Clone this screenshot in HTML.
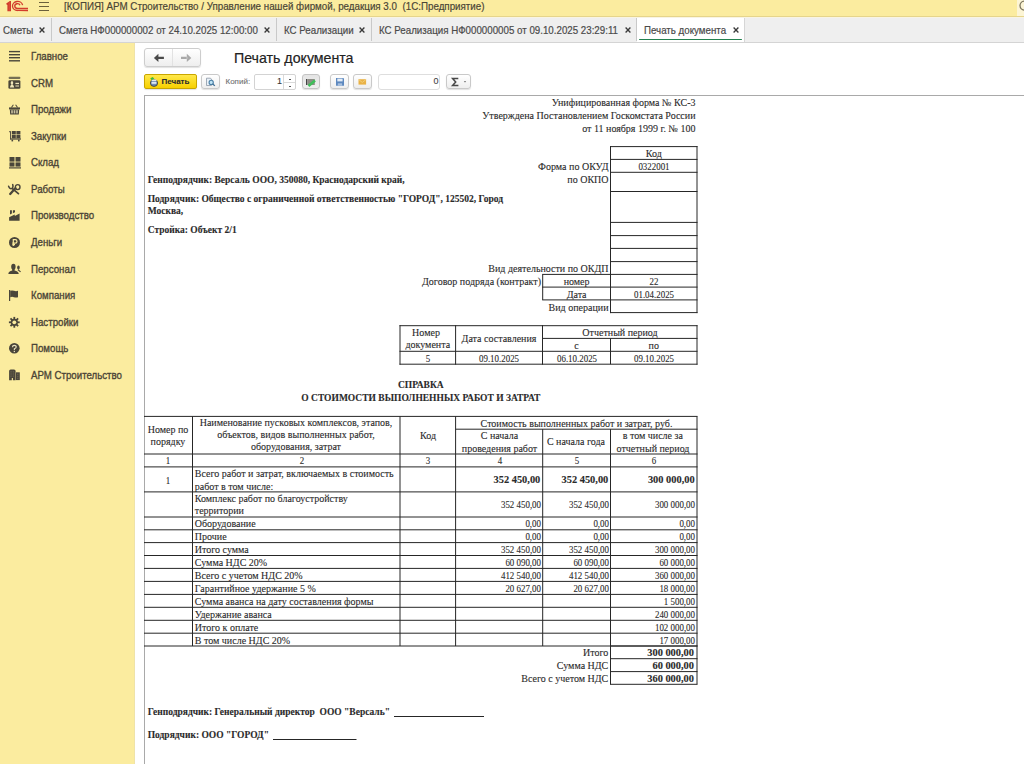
<!DOCTYPE html>
<html><head><meta charset="utf-8">
<style>
*{box-sizing:border-box;margin:0;padding:0}
html,body{width:1024px;height:764px;overflow:hidden;background:#fff;font-family:"Liberation Sans",sans-serif;color:#4a4a4a}
.a{position:absolute}
.tx{white-space:nowrap;color:#2a2a2a;-webkit-text-stroke:0.1px currentColor}
.n{letter-spacing:-0.45px}
.ui{-webkit-text-stroke:0.35px currentColor}
.ui2{-webkit-text-stroke:0.2px currentColor}
.btn{position:absolute;border:1px solid #c9c9c9;border-radius:3px;background:linear-gradient(#ffffff,#eeeeee);box-shadow:0 1px 1px rgba(0,0,0,0.12)}
</style></head><body>

<div class="a" style="left:0;top:0;width:1024px;height:17px;background:#fbec9f;border-bottom:1px solid #e6d58c"></div>
<svg class="a" style="left:0;top:0" width="32" height="14" viewBox="0 0 32 14">
<path d="M6.2 3.4 L9.9 1.0 H11.0 V11.3 H7.4 V4.7 L6.9 5.0Z" fill="#cf3a2a"/>
<path d="M9.2 2.2 V10.6" stroke="#ea5a48" stroke-width="0.7"/>
<g fill="none" stroke="#d23c2c" stroke-width="1.35">
<path d="M22.6 5.1 A5.1 4.5 0 1 0 17.6 10.45 H28"/>
<path d="M20.0 5.2 A2.7 2.4 0 1 0 17.6 8.45 H28"/>
</g></svg>
<div class="a" style="left:1017px;top:0;width:7px;height:16px;background:#fcf5d6"></div>
<svg class="a" style="left:1010px;top:0" width="14" height="14" viewBox="1010 0 14 14"><circle cx="1024.6" cy="5.6" r="4.6" fill="none" stroke="#7a735c" stroke-width="1.3"/></svg>
<div class="a" style="left:39px;top:2px;width:10px;height:1.4px;background:#6a5f3c"></div>
<div class="a" style="left:39px;top:6px;width:10px;height:1.4px;background:#6a5f3c"></div>
<div class="a" style="left:39px;top:10px;width:10px;height:1.4px;background:#6a5f3c"></div>
<div class="a tx ui2" style="top:0px;font-size:11px;line-height:13.2px;font-family:'Liberation Sans';color:#4a4536;left:64.3px;transform:scaleX(0.89);transform-origin:0 0;">[КОПИЯ] АРМ Строительство / Управление нашей фирмой, редакция 3.0&nbsp; (1С:Предприятие)</div>
<div class="a" style="left:0;top:17px;width:1024px;height:26px;background:#efefef;border-top:1px solid #f8f4e4;border-bottom:1px solid #d4d4d4"></div>
<div class="a" style="left:51px;top:18px;width:1px;height:23px;background:#c9c9c9"></div>
<div class="a tx ui2" style="top:24px;font-size:11px;line-height:13.2px;font-family:'Liberation Sans';color:#4a4a4a;left:3.4px;transform:scaleX(0.885);transform-origin:0 0;">Сметы</div>
<svg class="a" style="left:39px;top:27px" width="6" height="6" viewBox="0 0 6 6"><path d="M0.6 0.6 L5.4 5.4 M5.4 0.6 L0.6 5.4" stroke="#3a3a3a" stroke-width="1.35"/></svg>
<div class="a" style="left:276px;top:18px;width:1px;height:23px;background:#c9c9c9"></div>
<div class="a tx ui2" style="top:24px;font-size:11px;line-height:13.2px;font-family:'Liberation Sans';color:#4a4a4a;left:59.1px;transform:scaleX(0.885);transform-origin:0 0;">Смета НФ000000002 от 24.10.2025 12:00:00</div>
<svg class="a" style="left:264px;top:27px" width="6" height="6" viewBox="0 0 6 6"><path d="M0.6 0.6 L5.4 5.4 M5.4 0.6 L0.6 5.4" stroke="#3a3a3a" stroke-width="1.35"/></svg>
<div class="a" style="left:371px;top:18px;width:1px;height:23px;background:#c9c9c9"></div>
<div class="a tx ui2" style="top:24px;font-size:11px;line-height:13.2px;font-family:'Liberation Sans';color:#4a4a4a;left:283.9px;transform:scaleX(0.885);transform-origin:0 0;">КС Реализации</div>
<svg class="a" style="left:359px;top:27px" width="6" height="6" viewBox="0 0 6 6"><path d="M0.6 0.6 L5.4 5.4 M5.4 0.6 L0.6 5.4" stroke="#3a3a3a" stroke-width="1.35"/></svg>
<div class="a" style="left:636px;top:18px;width:1px;height:23px;background:#c9c9c9"></div>
<div class="a tx ui2" style="top:24px;font-size:11px;line-height:13.2px;font-family:'Liberation Sans';color:#4a4a4a;left:378.6px;transform:scaleX(0.885);transform-origin:0 0;">КС Реализация НФ000000005 от 09.10.2025 23:29:11</div>
<svg class="a" style="left:624.7px;top:27px" width="6" height="6" viewBox="0 0 6 6"><path d="M0.6 0.6 L5.4 5.4 M5.4 0.6 L0.6 5.4" stroke="#3a3a3a" stroke-width="1.35"/></svg>
<div class="a" style="left:637px;top:18px;width:108px;height:24px;background:#fff;border-right:1px solid #d6d6d6"></div>
<div class="a" style="left:639px;top:38.8px;width:103px;height:1.5px;background:#23814f;border-radius:1px"></div>
<div class="a tx ui2" style="top:24px;font-size:11px;line-height:13.2px;font-family:'Liberation Sans';color:#4a4a4a;left:644px;transform:scaleX(0.885);transform-origin:0 0;">Печать документа</div>
<svg class="a" style="left:733px;top:27px" width="6" height="6" viewBox="0 0 6 6"><path d="M0.6 0.6 L5.4 5.4 M5.4 0.6 L0.6 5.4" stroke="#3a3a3a" stroke-width="1.35"/></svg>
<div class="a" style="left:0;top:43px;width:135px;height:721px;background:#fbec9f;border-right:1px solid #efe3a8"></div>
<div class="a tx ui" style="top:50px;font-size:11px;line-height:13.2px;font-family:'Liberation Sans';color:#4b4536;left:30.7px;transform:scaleX(0.88);transform-origin:0 0;">Главное</div>
<svg class="a" style="left:9px;top:50.70px;overflow:visible" width="11" height="11" viewBox="0 0 11 11"><g fill="#4a463a"><rect x="0" y="-0.1" width="11" height="1.4"/><rect x="0" y="3" width="11" height="1.4"/><rect x="0" y="6" width="11" height="1.4"/><rect x="0" y="9.1" width="11" height="1.4"/></g></svg>
<div class="a tx ui" style="top:77px;font-size:11px;line-height:13.2px;font-family:'Liberation Sans';color:#4b4536;left:30.7px;transform:scaleX(0.88);transform-origin:0 0;">CRM</div>
<svg class="a" style="left:9px;top:77.70px;overflow:visible" width="11" height="11" viewBox="0 0 11 11"><g fill="#4a463a"><rect x="-0.4" y="-1.3" width="11.8" height="2.2" rx="1" opacity="0.75"/><rect x="-0.6" y="2.2" width="12" height="8.6" rx="1.3"/></g><g fill="#efe6b8"><path d="M0.9 9.4 Q1.2 6.9 2.6 6.8 Q1.6 6.2 1.7 4.4 Q2 2.9 3 2.9 Q4 2.9 4.2 4.4 Q4.3 6.2 3.4 6.8 Q4.9 6.9 5.2 9.4Z"/><rect x="6.4" y="4.8" width="3.6" height="1.3"/><rect x="6.4" y="7.5" width="3.6" height="1"/></g></svg>
<div class="a tx ui" style="top:103px;font-size:11px;line-height:13.2px;font-family:'Liberation Sans';color:#4b4536;left:30.7px;transform:scaleX(0.88);transform-origin:0 0;">Продажи</div>
<svg class="a" style="left:9px;top:103.70px;overflow:visible" width="11" height="11" viewBox="0 0 11 11"><g fill="#4a463a"><path d="M1.8 3.4 L4 0.5 L4.8 0.9 L3 3.4Z M9.2 3.4 L7 0.5 L6.2 0.9 L8 3.4Z"/><rect x="0" y="3.4" width="11" height="2"/><path d="M0.8 5.4 H10.2 L9.8 10.5 H1.2Z"/></g><g fill="#c9c1a0"><rect x="2.2" y="6.2" width="1.6" height="3.2"/><rect x="4.7" y="6.2" width="1.6" height="3.2"/><rect x="7.2" y="6.2" width="1.6" height="3.2"/></g></svg>
<div class="a tx ui" style="top:130px;font-size:11px;line-height:13.2px;font-family:'Liberation Sans';color:#4b4536;left:30.7px;transform:scaleX(0.88);transform-origin:0 0;">Закупки</div>
<svg class="a" style="left:9px;top:130.70px;overflow:visible" width="11" height="11" viewBox="0 0 11 11"><g fill="#4a463a"><rect x="0" y="0.3" width="1.6" height="0.9"/><rect x="1" y="0.3" width="0.9" height="8"/><rect x="1" y="7.4" width="11" height="1.2"/><rect x="2.8" y="0" width="4" height="3.4"/><rect x="7.4" y="0" width="4" height="3.4"/><rect x="2.8" y="3.9" width="4" height="3.4"/><rect x="7.4" y="3.9" width="4" height="3.4"/><rect x="2.5" y="8.6" width="1.6" height="1.8"/><rect x="9" y="8.6" width="1.6" height="1.8"/></g></svg>
<div class="a tx ui" style="top:156px;font-size:11px;line-height:13.2px;font-family:'Liberation Sans';color:#4b4536;left:30.7px;transform:scaleX(0.88);transform-origin:0 0;">Склад</div>
<svg class="a" style="left:9px;top:156.70px;overflow:visible" width="11" height="11" viewBox="0 0 11 11"><g fill="#4a463a"><rect x="0.5" y="0" width="5" height="4.6"/><rect x="6.5" y="0" width="5" height="4.6"/><rect x="0.5" y="5.4" width="5" height="4.2"/><rect x="6.5" y="5.4" width="5" height="4.2"/><rect x="0" y="10.3" width="12" height="1.2"/></g></svg>
<div class="a tx ui" style="top:183px;font-size:11px;line-height:13.2px;font-family:'Liberation Sans';color:#4b4536;left:30.7px;transform:scaleX(0.88);transform-origin:0 0;">Работы</div>
<svg class="a" style="left:9px;top:183.70px;overflow:visible" width="11" height="11" viewBox="0 0 11 11"><g fill="none" stroke="#4a463a" stroke-linecap="round"><path d="M-0.4 2.3 Q0.7 5.4 3 4.4 Q4.6 3.3 3.7 0.6" stroke-width="1.5"/><path d="M3.4 4.6 L9.4 9.6" stroke-width="1.8"/><path d="M6.3 4.3 L1.2 10" stroke-width="2.3"/><ellipse cx="8.7" cy="3.1" rx="2.3" ry="2.5" stroke-width="1.4"/></g></svg>
<div class="a tx ui" style="top:209px;font-size:11px;line-height:13.2px;font-family:'Liberation Sans';color:#4b4536;left:30.7px;transform:scaleX(0.88);transform-origin:0 0;">Производство</div>
<svg class="a" style="left:9px;top:209.70px;overflow:visible" width="11" height="11" viewBox="0 0 11 11"><g fill="#4a463a"><path d="M1 0.2 H2.9 V3.6 L1 4.4Z"/><path d="M3.9 0.2 H6 V2.2 L3.9 3.2Z"/><path d="M0.1 10.7 V7.3 L5.8 4.4 V6.1 L10.6 3.4 V10.7Z"/></g></svg>
<div class="a tx ui" style="top:236px;font-size:11px;line-height:13.2px;font-family:'Liberation Sans';color:#4b4536;left:30.7px;transform:scaleX(0.88);transform-origin:0 0;">Деньги</div>
<svg class="a" style="left:9px;top:236.70px;overflow:visible" width="11" height="11" viewBox="0 0 11 11"><circle cx="5.5" cy="5.5" r="5.5" fill="#4a463a"/><path d="M4.3 9 V2.7 H6.3 A1.7 1.7 0 0 1 6.3 6.1 H3.3 M3.3 7.6 H6" fill="none" stroke="#fbec9f" stroke-width="1.2"/></svg>
<div class="a tx ui" style="top:263px;font-size:11px;line-height:13.2px;font-family:'Liberation Sans';color:#4b4536;left:30.7px;transform:scaleX(0.88);transform-origin:0 0;">Персонал</div>
<svg class="a" style="left:9px;top:263.70px;overflow:visible" width="11" height="11" viewBox="0 0 11 11"><g fill="#4a463a"><ellipse cx="4.4" cy="2.7" rx="2.2" ry="3"/><rect x="3.2" y="4.5" width="2.4" height="2.6"/><path d="M-0.7 9.9 Q-0.5 6.7 4.4 6.6 Q9.3 6.7 9.8 9.9Z"/><ellipse cx="9.45" cy="3.6" rx="1.3" ry="2.1"/></g><path d="M9 5.8 L11.6 7.9" stroke="#4a463a" stroke-width="1.2"/></svg>
<div class="a tx ui" style="top:289px;font-size:11px;line-height:13.2px;font-family:'Liberation Sans';color:#4b4536;left:30.7px;transform:scaleX(0.88);transform-origin:0 0;">Компания</div>
<svg class="a" style="left:9px;top:289.70px;overflow:visible" width="11" height="11" viewBox="0 0 11 11"><g fill="#4a463a"><rect x="0" y="0" width="1.2" height="11"/><path d="M1.2 0.8 Q3 0 5 0.8 Q7 1.6 9 0.8 V7.2 Q7 8 5 7.2 Q3 6.4 1.2 7.2Z"/></g></svg>
<div class="a tx ui" style="top:316px;font-size:11px;line-height:13.2px;font-family:'Liberation Sans';color:#4b4536;left:30.7px;transform:scaleX(0.88);transform-origin:0 0;">Настройки</div>
<svg class="a" style="left:9px;top:316.70px;overflow:visible" width="11" height="11" viewBox="0 0 11 11"><g transform="translate(5.3 5.3)"><g fill="#4a463a"><rect x="-0.9" y="-5.4" width="1.8" height="10.8"/><rect x="-0.9" y="-5.4" width="1.8" height="10.8" transform="rotate(45)"/><rect x="-0.9" y="-5.4" width="1.8" height="10.8" transform="rotate(90)"/><rect x="-0.9" y="-5.4" width="1.8" height="10.8" transform="rotate(135)"/><circle r="3.6"/></g><circle r="1.9" fill="#fbec9f"/></g></svg>
<div class="a tx ui" style="top:342px;font-size:11px;line-height:13.2px;font-family:'Liberation Sans';color:#4b4536;left:30.7px;transform:scaleX(0.88);transform-origin:0 0;">Помощь</div>
<svg class="a" style="left:9px;top:342.70px;overflow:visible" width="11" height="11" viewBox="0 0 11 11"><circle cx="5.3" cy="5.3" r="5.3" fill="#4a463a"/><path d="M3.5 4.2 Q3.5 2.4 5.3 2.4 Q7.2 2.4 7.2 4 Q7.2 5.1 5.4 5.8 V7" fill="none" stroke="#e9e0bd" stroke-width="1.2"/><rect x="4.7" y="7.8" width="1.3" height="1.3" fill="#e9e0bd"/></svg>
<div class="a tx ui" style="top:369px;font-size:11px;line-height:13.2px;font-family:'Liberation Sans';color:#4b4536;left:30.7px;transform:scaleX(0.88);transform-origin:0 0;">АРМ Строительство</div>
<svg class="a" style="left:9px;top:369.70px;overflow:visible" width="11" height="11" viewBox="0 0 11 11"><g fill="#4a463a"><path d="M0.1 10.3 V1 Q0.1 -0.6 1.7 -0.6 H5 Q6.6 -0.6 6.6 1 V10.3 H3.9 V8 H2.8 V10.3Z"/><rect x="7" y="2.3" width="3.8" height="7.8"/></g><g fill="#8d8668"><rect x="1.6" y="1.5" width="0.9" height="0.8"/><rect x="3.8" y="1.5" width="0.9" height="0.8"/><rect x="1.6" y="3.6" width="0.9" height="0.8"/><rect x="3.8" y="3.6" width="0.9" height="0.8"/><rect x="1.6" y="5.7" width="0.9" height="0.8"/><rect x="3.8" y="5.7" width="0.9" height="0.8"/><rect x="8.4" y="3.8" width="0.9" height="0.8"/><rect x="8.4" y="5.8" width="0.9" height="0.8"/><rect x="8.4" y="7.8" width="0.9" height="0.8"/></g></svg>
<div class="btn" style="left:144px;top:48px;width:57px;height:19px;border-color:#cdcdcd"></div>
<div class="a" style="left:172px;top:49px;width:1px;height:17px;background:#e2e2e2"></div>
<svg class="a" style="left:150px;top:50px" width="48" height="16" viewBox="150 50 48 16"><path d="M153.9 57.9 L158.4 53.7 V62.1Z M158 56.8 H163.9 V59 H158Z" fill="#4a4a4a"/><path d="M191.3 57.9 L186.8 53.7 V62.1Z M181 56.8 H187.2 V59 H181Z" fill="#a9a9a9"/></svg>
<div class="a tx ui2" style="top:49px;font-size:15px;line-height:18.0px;font-family:'Liberation Sans';color:#222;left:233.9px;transform:scaleX(0.945);transform-origin:0 0;">Печать документа</div>
<div class="a" style="left:144px;top:74px;width:53px;height:15px;border:1px solid #c9a600;border-radius:2px;background:linear-gradient(#ffe84a,#f7d000);box-shadow:0 1px 1px rgba(0,0,0,0.12)"></div>
<svg class="a" style="left:148px;top:75px" width="12" height="13" viewBox="148 75 12 13"><ellipse cx="154" cy="83" rx="3.6" ry="3.4" fill="#6f8db5" stroke="#333" stroke-width="0.8"/><rect x="151.6" y="81.8" width="4.8" height="2" fill="#dfe8f2"/><path d="M151.5 80.2 H156.5" stroke="#f4f8f4" stroke-width="1.4"/><path d="M150.3 78.3 L152.8 77 L154.2 78.8 L151.6 80.2Z" fill="#3cb83c"/></svg>
<div class="a tx " style="top:77px;font-size:8px;line-height:9.6px;font-family:'Liberation Sans';font-weight:bold;color:#2c2c2c;left:161.5px;">Печать</div>
<div class="btn" style="left:201px;top:74px;width:19px;height:15px"></div>
<svg class="a" style="left:204px;top:76px" width="14" height="12" viewBox="204 76 14 12"><path d="M206.5 78.2 H210.5 L211.5 79.2 V85.5 H206.5Z" fill="#e9f1f8" stroke="#8a97a6" stroke-width="0.8"/><circle cx="211.2" cy="82.4" r="2.1" fill="#bfe3f5" stroke="#4a7fa6" stroke-width="1.1"/><path d="M212.6 83.8 L214.8 85.9" stroke="#3f6f95" stroke-width="1.3"/></svg>
<div class="a tx " style="top:77px;font-size:8px;line-height:9.6px;font-family:'Liberation Sans';color:#707070;left:225.5px;">Копий:</div>
<div class="a" style="left:254px;top:74px;width:42px;height:16px;border:1px solid #d3d3d3;border-radius:2px;background:#fff"></div>
<div class="a" style="left:283px;top:75px;width:1px;height:14px;background:#d9d9d9"></div>
<div class="a" style="left:284px;top:82px;width:11px;height:1px;background:#d9d9d9"></div>
<div class="a" style="left:288.5px;top:79px;width:2px;height:1px;background:#555"></div>
<div class="a" style="left:288.5px;top:85.5px;width:2px;height:1px;background:#555"></div>
<div class="a tx " style="top:76px;font-size:9px;line-height:10.8px;font-family:'Liberation Sans';color:#333;left:262px;width:20px;text-align:right;">1</div>
<div class="a" style="left:302px;top:74px;width:18px;height:15px;border:1px solid #c4c4c4;border-radius:3px;background:linear-gradient(#e4e4e4,#efefef);box-shadow:0 1px 1px rgba(0,0,0,0.12)"></div>
<svg class="a" style="left:305px;top:77px" width="12" height="10" viewBox="305 77 12 10"><rect x="306" y="79" width="1.3" height="6" fill="#444"/><rect x="307.3" y="79" width="7.5" height="6" fill="#8d8d86"/><path d="M308.5 86 L315 80.5" stroke="#3fbf5a" stroke-width="2.6"/></svg>
<div class="btn" style="left:330px;top:74px;width:19px;height:15px"></div>
<svg class="a" style="left:335px;top:77px" width="10" height="10" viewBox="335 77 10 10"><path d="M336 78 H343.5 L344 78.5 V85.8 H336Z" fill="#5d88bf"/><rect x="337.3" y="78.6" width="5.3" height="2.8" fill="#e3ecf6"/><rect x="337.8" y="83.3" width="4.3" height="2.5" fill="#a9c0de"/></svg>
<div class="btn" style="left:353px;top:74px;width:19px;height:15px"></div>
<svg class="a" style="left:358px;top:79px" width="9" height="7" viewBox="358 79 9 7"><rect x="358.5" y="79.2" width="7.6" height="5.4" fill="#e9b246"/><path d="M358.5 79.4 L362.3 82.4 L366.1 79.4" fill="none" stroke="#f7d98c" stroke-width="0.7"/></svg>
<div class="a" style="left:378px;top:74px;width:62px;height:16px;border:1px solid #dedede;border-radius:3px;background:#fff"></div>
<div class="a tx " style="top:76px;font-size:9px;line-height:10.8px;font-family:'Liberation Sans';color:#444;left:418.5px;width:20px;text-align:right;">0</div>
<div class="btn" style="left:446px;top:74px;width:25px;height:15px"></div>
<svg class="a" style="left:450px;top:76px" width="18" height="12" viewBox="450 76 18 12"><path d="M458.3 78.6 H452.6 L455.7 82 L452.6 85.4 H458.4" fill="none" stroke="#484848" stroke-width="1.5"/><path d="M463.8 81.2 H466.2 L465 82.6Z" fill="#555"/></svg>
<div class="a" style="left:144px;top:95px;width:880px;height:669px;border-top:1px solid #a9a9a9;border-left:1px solid #a9a9a9"></div>
<div class="a tx " style="top:97px;font-size:10px;line-height:12.0px;font-family:'Liberation Serif';left:395.5px;width:300px;text-align:right;">Унифицированная форма № КС-3</div>
<div class="a tx " style="top:110px;font-size:10px;line-height:12.0px;font-family:'Liberation Serif';left:395.5px;width:300px;text-align:right;">Утверждена Постановлением Госкомстата России</div>
<div class="a tx " style="top:123px;font-size:10px;line-height:12.0px;font-family:'Liberation Serif';left:395.5px;width:300px;text-align:right;">от 11 ноября 1999 г. № 100</div>
<div class="a tx " style="top:148px;font-size:10px;line-height:12.0px;font-family:'Liberation Serif';left:613.8px;width:80px;text-align:center;">Код</div>
<div class="a tx " style="top:161px;font-size:10px;line-height:12.0px;font-family:'Liberation Serif';left:603.8px;width:100px;text-align:center;transform:scaleX(0.89);transform-origin:50% 0;">0322001</div>
<div class="a tx " style="top:161px;font-size:10px;line-height:12.0px;font-family:'Liberation Serif';left:408.5px;width:200px;text-align:right;">Форма по ОКУД</div>
<div class="a tx " style="top:174px;font-size:10px;line-height:12.0px;font-family:'Liberation Serif';left:408.5px;width:200px;text-align:right;">по ОКПО</div>
<div class="a tx " style="top:263px;font-size:10px;line-height:12.0px;font-family:'Liberation Serif';left:408.5px;width:200px;text-align:right;">Вид деятельности по ОКДП</div>
<div class="a tx " style="top:276px;font-size:10px;line-height:12.0px;font-family:'Liberation Serif';left:341px;width:200px;text-align:right;">Договор подряда (контракт)</div>
<div class="a tx " style="top:276px;font-size:10px;line-height:12.0px;font-family:'Liberation Serif';left:546.6px;width:60px;text-align:center;">номер</div>
<div class="a tx " style="top:289px;font-size:10px;line-height:12.0px;font-family:'Liberation Serif';left:546.6px;width:60px;text-align:center;">Дата</div>
<div class="a tx " style="top:276px;font-size:10px;line-height:12.0px;font-family:'Liberation Serif';left:603.8px;width:100px;text-align:center;transform:scaleX(0.89);transform-origin:50% 0;">22</div>
<div class="a tx " style="top:289px;font-size:10px;line-height:12.0px;font-family:'Liberation Serif';left:603.8px;width:100px;text-align:center;transform:scaleX(0.89);transform-origin:50% 0;">01.04.2025</div>
<div class="a tx " style="top:302px;font-size:10px;line-height:12.0px;font-family:'Liberation Serif';left:408.5px;width:200px;text-align:right;">Вид операции</div>
<div class="a tx " style="top:175px;font-size:9.5px;line-height:11.4px;font-family:'Liberation Serif';font-weight:bold;left:147.7px;">Генподрядчик: Версаль ООО, 350080, Краснодарский край,</div>
<div class="a tx " style="top:194px;font-size:9.5px;line-height:11.4px;font-family:'Liberation Serif';font-weight:bold;left:147.7px;">Подрядчик: Общество с ограниченной ответственностью "ГОРОД", 125502, Город</div>
<div class="a tx " style="top:206px;font-size:9.5px;line-height:11.4px;font-family:'Liberation Serif';font-weight:bold;left:147.7px;">Москва,</div>
<div class="a tx " style="top:225px;font-size:9.5px;line-height:11.4px;font-family:'Liberation Serif';font-weight:bold;left:147.7px;">Стройка: Объект 2/1</div>
<div class="a tx " style="top:327px;font-size:10px;line-height:12.0px;font-family:'Liberation Serif';left:396.0px;width:60px;text-align:center;">Номер</div>
<div class="a tx " style="top:339px;font-size:10px;line-height:12.0px;font-family:'Liberation Serif';left:397.8px;width:60px;text-align:center;">документа</div>
<div class="a tx " style="top:333px;font-size:10px;line-height:12.0px;font-family:'Liberation Serif';left:454.0px;width:90px;text-align:center;">Дата составления</div>
<div class="a tx " style="top:327px;font-size:10px;line-height:12.0px;font-family:'Liberation Serif';left:545.0px;width:150px;text-align:center;">Отчетный период</div>
<div class="a tx " style="top:340px;font-size:10px;line-height:12.0px;font-family:'Liberation Serif';left:546.6px;width:60px;text-align:center;">с</div>
<div class="a tx " style="top:340px;font-size:10px;line-height:12.0px;font-family:'Liberation Serif';left:623.8px;width:60px;text-align:center;">по</div>
<div class="a tx " style="top:353px;font-size:10px;line-height:12.0px;font-family:'Liberation Serif';left:377.8px;width:100px;text-align:center;transform:scaleX(0.89);transform-origin:50% 0;">5</div>
<div class="a tx " style="top:353px;font-size:10px;line-height:12.0px;font-family:'Liberation Serif';left:449.0px;width:100px;text-align:center;transform:scaleX(0.89);transform-origin:50% 0;">09.10.2025</div>
<div class="a tx " style="top:353px;font-size:10px;line-height:12.0px;font-family:'Liberation Serif';left:526.6px;width:100px;text-align:center;transform:scaleX(0.89);transform-origin:50% 0;">06.10.2025</div>
<div class="a tx " style="top:353px;font-size:10px;line-height:12.0px;font-family:'Liberation Serif';left:603.8px;width:100px;text-align:center;transform:scaleX(0.89);transform-origin:50% 0;">09.10.2025</div>
<div class="a tx " style="top:380px;font-size:9.5px;line-height:11.4px;font-family:'Liberation Serif';font-weight:bold;left:270.8px;width:300px;text-align:center;">СПРАВКА</div>
<div class="a tx " style="top:393px;font-size:9.5px;line-height:11.4px;font-family:'Liberation Serif';font-weight:bold;left:220.8px;width:400px;text-align:center;">О СТОИМОСТИ ВЫПОЛНЕННЫХ РАБОТ И ЗАТРАТ</div>
<div class="a tx " style="top:424px;font-size:10px;line-height:12.0px;font-family:'Liberation Serif';left:138.0px;width:60px;text-align:center;">Номер по</div>
<div class="a tx " style="top:436px;font-size:10px;line-height:12.0px;font-family:'Liberation Serif';left:138.0px;width:60px;text-align:center;">порядку</div>
<div class="a tx " style="top:417px;font-size:10px;line-height:12.0px;font-family:'Liberation Serif';left:186.0px;width:220px;text-align:center;">Наименование пусковых комплексов, этапов,</div>
<div class="a tx " style="top:429px;font-size:10px;line-height:12.0px;font-family:'Liberation Serif';left:186.0px;width:220px;text-align:center;">объектов, видов выполненных работ,</div>
<div class="a tx " style="top:441px;font-size:10px;line-height:12.0px;font-family:'Liberation Serif';left:186.0px;width:220px;text-align:center;">оборудования, затрат</div>
<div class="a tx " style="top:430px;font-size:10px;line-height:12.0px;font-family:'Liberation Serif';left:398.0px;width:60px;text-align:center;">Код</div>
<div class="a tx " style="top:418px;font-size:10px;line-height:12.0px;font-family:'Liberation Serif';left:446.5px;width:260px;text-align:center;">Стоимость выполненных работ и затрат, руб.</div>
<div class="a tx " style="top:430px;font-size:10px;line-height:12.0px;font-family:'Liberation Serif';left:454.5px;width:90px;text-align:center;">С начала</div>
<div class="a tx " style="top:443px;font-size:10px;line-height:12.0px;font-family:'Liberation Serif';left:454.5px;width:90px;text-align:center;">проведения работ</div>
<div class="a tx " style="top:436px;font-size:10px;line-height:12.0px;font-family:'Liberation Serif';left:531.0px;width:90px;text-align:center;">С начала года</div>
<div class="a tx " style="top:430px;font-size:10px;line-height:12.0px;font-family:'Liberation Serif';left:607.8px;width:90px;text-align:center;">в том числе за</div>
<div class="a tx " style="top:443px;font-size:10px;line-height:12.0px;font-family:'Liberation Serif';left:608.0px;width:90px;text-align:center;">отчетный период</div>
<div class="a tx " style="top:455px;font-size:10px;line-height:12.0px;font-family:'Liberation Serif';left:118.0px;width:100px;text-align:center;transform:scaleX(0.89);transform-origin:50% 0;">1</div>
<div class="a tx " style="top:455px;font-size:10px;line-height:12.0px;font-family:'Liberation Serif';left:252.0px;width:100px;text-align:center;transform:scaleX(0.89);transform-origin:50% 0;">2</div>
<div class="a tx " style="top:455px;font-size:10px;line-height:12.0px;font-family:'Liberation Serif';left:378.0px;width:100px;text-align:center;transform:scaleX(0.89);transform-origin:50% 0;">3</div>
<div class="a tx " style="top:455px;font-size:10px;line-height:12.0px;font-family:'Liberation Serif';left:449.5px;width:100px;text-align:center;transform:scaleX(0.89);transform-origin:50% 0;">4</div>
<div class="a tx " style="top:455px;font-size:10px;line-height:12.0px;font-family:'Liberation Serif';left:527.0px;width:100px;text-align:center;transform:scaleX(0.89);transform-origin:50% 0;">5</div>
<div class="a tx " style="top:455px;font-size:10px;line-height:12.0px;font-family:'Liberation Serif';left:604.0px;width:100px;text-align:center;transform:scaleX(0.89);transform-origin:50% 0;">6</div>
<div class="a tx " style="top:475px;font-size:10px;line-height:12.0px;font-family:'Liberation Serif';left:118.0px;width:100px;text-align:center;transform:scaleX(0.89);transform-origin:50% 0;">1</div>
<div class="a tx " style="top:468px;font-size:10px;line-height:12.0px;font-family:'Liberation Serif';left:194.8px;">Всего работ и затрат, включаемых в стоимость</div>
<div class="a tx " style="top:481px;font-size:10px;line-height:12.0px;font-family:'Liberation Serif';left:194.8px;">работ в том числе:</div>
<div class="a tx " style="top:474px;font-size:10.4px;line-height:12.48px;font-family:'Liberation Serif';font-weight:bold;left:440.29999999999995px;width:100px;text-align:right;">352 450,00</div>
<div class="a tx " style="top:474px;font-size:10.4px;line-height:12.48px;font-family:'Liberation Serif';font-weight:bold;left:508.29999999999995px;width:100px;text-align:right;">352 450,00</div>
<div class="a tx " style="top:474px;font-size:10.4px;line-height:12.48px;font-family:'Liberation Serif';font-weight:bold;left:594.7px;width:100px;text-align:right;">300 000,00</div>
<div class="a tx " style="top:493px;font-size:10px;line-height:12.0px;font-family:'Liberation Serif';left:194.8px;">Комплекс работ по благоустройству</div>
<div class="a tx " style="top:505px;font-size:10px;line-height:12.0px;font-family:'Liberation Serif';left:194.8px;">территории</div>
<div class="a tx " style="top:499px;font-size:10px;line-height:12.0px;font-family:'Liberation Serif';left:440.70000000000005px;width:100px;text-align:right;transform:scaleX(0.89);transform-origin:100% 0;">352 450,00</div>
<div class="a tx " style="top:499px;font-size:10px;line-height:12.0px;font-family:'Liberation Serif';left:508.70000000000005px;width:100px;text-align:right;transform:scaleX(0.89);transform-origin:100% 0;">352 450,00</div>
<div class="a tx " style="top:499px;font-size:10px;line-height:12.0px;font-family:'Liberation Serif';left:595px;width:100px;text-align:right;transform:scaleX(0.89);transform-origin:100% 0;">300 000,00</div>
<div class="a tx " style="top:518px;font-size:10px;line-height:12.0px;font-family:'Liberation Serif';left:194.8px;">Оборудование</div>
<div class="a tx " style="top:518px;font-size:10px;line-height:12.0px;font-family:'Liberation Serif';left:440.70000000000005px;width:100px;text-align:right;transform:scaleX(0.89);transform-origin:100% 0;">0,00</div>
<div class="a tx " style="top:518px;font-size:10px;line-height:12.0px;font-family:'Liberation Serif';left:508.70000000000005px;width:100px;text-align:right;transform:scaleX(0.89);transform-origin:100% 0;">0,00</div>
<div class="a tx " style="top:518px;font-size:10px;line-height:12.0px;font-family:'Liberation Serif';left:595px;width:100px;text-align:right;transform:scaleX(0.89);transform-origin:100% 0;">0,00</div>
<div class="a tx " style="top:531px;font-size:10px;line-height:12.0px;font-family:'Liberation Serif';left:194.8px;">Прочие</div>
<div class="a tx " style="top:531px;font-size:10px;line-height:12.0px;font-family:'Liberation Serif';left:440.70000000000005px;width:100px;text-align:right;transform:scaleX(0.89);transform-origin:100% 0;">0,00</div>
<div class="a tx " style="top:531px;font-size:10px;line-height:12.0px;font-family:'Liberation Serif';left:508.70000000000005px;width:100px;text-align:right;transform:scaleX(0.89);transform-origin:100% 0;">0,00</div>
<div class="a tx " style="top:531px;font-size:10px;line-height:12.0px;font-family:'Liberation Serif';left:595px;width:100px;text-align:right;transform:scaleX(0.89);transform-origin:100% 0;">0,00</div>
<div class="a tx " style="top:544px;font-size:10px;line-height:12.0px;font-family:'Liberation Serif';left:194.8px;">Итого сумма</div>
<div class="a tx " style="top:544px;font-size:10px;line-height:12.0px;font-family:'Liberation Serif';left:440.70000000000005px;width:100px;text-align:right;transform:scaleX(0.89);transform-origin:100% 0;">352 450,00</div>
<div class="a tx " style="top:544px;font-size:10px;line-height:12.0px;font-family:'Liberation Serif';left:508.70000000000005px;width:100px;text-align:right;transform:scaleX(0.89);transform-origin:100% 0;">352 450,00</div>
<div class="a tx " style="top:544px;font-size:10px;line-height:12.0px;font-family:'Liberation Serif';left:595px;width:100px;text-align:right;transform:scaleX(0.89);transform-origin:100% 0;">300 000,00</div>
<div class="a tx " style="top:557px;font-size:10px;line-height:12.0px;font-family:'Liberation Serif';left:194.8px;">Сумма НДС 20%</div>
<div class="a tx " style="top:557px;font-size:10px;line-height:12.0px;font-family:'Liberation Serif';left:440.70000000000005px;width:100px;text-align:right;transform:scaleX(0.89);transform-origin:100% 0;">60 090,00</div>
<div class="a tx " style="top:557px;font-size:10px;line-height:12.0px;font-family:'Liberation Serif';left:508.70000000000005px;width:100px;text-align:right;transform:scaleX(0.89);transform-origin:100% 0;">60 090,00</div>
<div class="a tx " style="top:557px;font-size:10px;line-height:12.0px;font-family:'Liberation Serif';left:595px;width:100px;text-align:right;transform:scaleX(0.89);transform-origin:100% 0;">60 000,00</div>
<div class="a tx " style="top:570px;font-size:10px;line-height:12.0px;font-family:'Liberation Serif';left:194.8px;">Всего с учетом НДС 20%</div>
<div class="a tx " style="top:570px;font-size:10px;line-height:12.0px;font-family:'Liberation Serif';left:440.70000000000005px;width:100px;text-align:right;transform:scaleX(0.89);transform-origin:100% 0;">412 540,00</div>
<div class="a tx " style="top:570px;font-size:10px;line-height:12.0px;font-family:'Liberation Serif';left:508.70000000000005px;width:100px;text-align:right;transform:scaleX(0.89);transform-origin:100% 0;">412 540,00</div>
<div class="a tx " style="top:570px;font-size:10px;line-height:12.0px;font-family:'Liberation Serif';left:595px;width:100px;text-align:right;transform:scaleX(0.89);transform-origin:100% 0;">360 000,00</div>
<div class="a tx " style="top:583px;font-size:10px;line-height:12.0px;font-family:'Liberation Serif';left:194.8px;">Гарантийное удержание 5 %</div>
<div class="a tx " style="top:583px;font-size:10px;line-height:12.0px;font-family:'Liberation Serif';left:440.70000000000005px;width:100px;text-align:right;transform:scaleX(0.89);transform-origin:100% 0;">20 627,00</div>
<div class="a tx " style="top:583px;font-size:10px;line-height:12.0px;font-family:'Liberation Serif';left:508.70000000000005px;width:100px;text-align:right;transform:scaleX(0.89);transform-origin:100% 0;">20 627,00</div>
<div class="a tx " style="top:583px;font-size:10px;line-height:12.0px;font-family:'Liberation Serif';left:595px;width:100px;text-align:right;transform:scaleX(0.89);transform-origin:100% 0;">18 000,00</div>
<div class="a tx " style="top:596px;font-size:10px;line-height:12.0px;font-family:'Liberation Serif';left:194.8px;">Сумма аванса на дату составления формы</div>
<div class="a tx " style="top:596px;font-size:10px;line-height:12.0px;font-family:'Liberation Serif';left:595px;width:100px;text-align:right;transform:scaleX(0.89);transform-origin:100% 0;">1 500,00</div>
<div class="a tx " style="top:609px;font-size:10px;line-height:12.0px;font-family:'Liberation Serif';left:194.8px;">Удержание аванса</div>
<div class="a tx " style="top:609px;font-size:10px;line-height:12.0px;font-family:'Liberation Serif';left:595px;width:100px;text-align:right;transform:scaleX(0.89);transform-origin:100% 0;">240 000,00</div>
<div class="a tx " style="top:622px;font-size:10px;line-height:12.0px;font-family:'Liberation Serif';left:194.8px;">Итого к оплате</div>
<div class="a tx " style="top:622px;font-size:10px;line-height:12.0px;font-family:'Liberation Serif';left:595px;width:100px;text-align:right;transform:scaleX(0.89);transform-origin:100% 0;">102 000,00</div>
<div class="a tx " style="top:635px;font-size:10px;line-height:12.0px;font-family:'Liberation Serif';left:194.8px;">В том числе НДС 20%</div>
<div class="a tx " style="top:635px;font-size:10px;line-height:12.0px;font-family:'Liberation Serif';left:595px;width:100px;text-align:right;transform:scaleX(0.89);transform-origin:100% 0;">17 000,00</div>
<div class="a tx " style="top:647px;font-size:10px;line-height:12.0px;font-family:'Liberation Serif';left:408.29999999999995px;width:200px;text-align:right;">Итого</div>
<div class="a tx " style="top:660px;font-size:10px;line-height:12.0px;font-family:'Liberation Serif';left:408.29999999999995px;width:200px;text-align:right;">Сумма НДС</div>
<div class="a tx " style="top:673px;font-size:10px;line-height:12.0px;font-family:'Liberation Serif';left:408.29999999999995px;width:200px;text-align:right;">Всего с учетом НДС</div>
<div class="a tx " style="top:647px;font-size:10.4px;line-height:12.48px;font-family:'Liberation Serif';font-weight:bold;left:594px;width:100px;text-align:right;">300 000,00</div>
<div class="a tx " style="top:660px;font-size:10.4px;line-height:12.48px;font-family:'Liberation Serif';font-weight:bold;left:594px;width:100px;text-align:right;">60 000,00</div>
<div class="a tx " style="top:673px;font-size:10.4px;line-height:12.48px;font-family:'Liberation Serif';font-weight:bold;left:594px;width:100px;text-align:right;">360 000,00</div>
<div class="a tx " style="top:707px;font-size:9.5px;line-height:11.4px;font-family:'Liberation Serif';font-weight:bold;left:147.7px;">Генподрядчик: Генеральный директор&nbsp; ООО "Версаль"</div>
<div class="a tx " style="top:730px;font-size:9.5px;line-height:11.4px;font-family:'Liberation Serif';font-weight:bold;left:147.7px;">Подрядчик: ООО "ГОРОД"</div>
<svg class="a" style="left:0;top:0" width="1024" height="764"><path d="M610.0 146.6H697.5 M610.0 159.4H697.5 M610.0 172.3H697.5 M610.0 191.5H697.5 M610.0 222.4H697.5 M610.0 235.6H697.5 M610.0 248.4H697.5 M610.0 261.6H697.5 M610.0 274.4H697.5 M610.0 287.1H697.5 M610.0 299.9H697.5 M610.0 312.6H697.5 M610.5 146.1V313.1 M697.0 146.1V313.1 M542.2 274.4H610.5 M542.2 287.1H610.5 M542.2 299.9H610.5 M542.7 274.4V299.9 M399.5 325.7H697.5 M399.5 351.3H697.5 M399.5 364.2H697.5 M542.5 338.4H697.5 M400 325.2V364.7 M455.6 325.2V364.7 M542.5 325.2V364.7 M697 325.2V364.7 M610.5 338.4V364.2 M144 416.4H697.5 M144 454.0H697.5 M144 466.9H697.5 M144 491.9H697.5 M144 517.0H697.5 M144 529.8H697.5 M144 542.6H697.5 M144 555.5H697.5 M144 568.4H697.5 M144 581.4H697.5 M144 594.4H697.5 M144 607.3H697.5 M144 620.3H697.5 M144 633.2H697.5 M144 646.0H697.5 M455.6 429.2H697.5 M192.5 416.4V646.0 M400.0 416.4V646.0 M455.6 416.4V646.0 M542.7 429.2V646.0 M610.5 429.2V646.0 M697.0 416.4V646.0 M610 646.0H697.5 M610 658.7H697.5 M610 671.6H697.5 M610 684.3H697.5 M610.5 646V684.3 M697 646V684.3 M394 716.5H484 M273 739.5H356.5" stroke="#262626" stroke-width="1" fill="none"/></svg>
</body></html>
